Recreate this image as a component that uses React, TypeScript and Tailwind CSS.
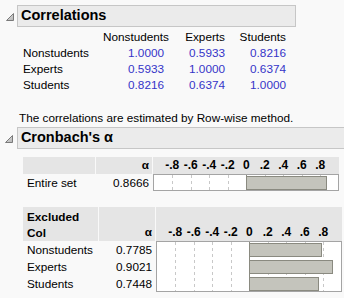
import React from 'react';

const font = { fontFamily: '"Liberation Sans", Arial, sans-serif' };

const ticks = [-0.8, -0.6, -0.4, -0.2, 0.2, 0.4, 0.6, 0.8];
const axisLabels = ['-.8', '-.6', '-.4', '-.2', '0', '.2', '.4', '.6', '.8'];

const corr = [
  { name: 'Nonstudents', v: ['1.0000', '0.5933', '0.8216'] },
  { name: 'Experts', v: ['0.5933', '1.0000', '0.6374'] },
  { name: 'Students', v: ['0.8216', '0.6374', '1.0000'] },
];

const excluded = [
  { name: 'Nonstudents', alpha: 0.7785 },
  { name: 'Experts', alpha: 0.9021 },
  { name: 'Students', alpha: 0.7448 },
];

function Disclosure() {
  return (
    <svg width="8" height="8" viewBox="0 0 8 8" className="block">
      <defs>
        <linearGradient id="tri" x1="0" y1="0" x2="1" y2="1">
          <stop offset="0" stopColor="#e6e6e6" />
          <stop offset="1" stopColor="#b4b4b4" />
        </linearGradient>
      </defs>
      <polygon points="0.5,7.5 7.5,0.5 7.5,7.5" fill="url(#tri)" stroke="#7a7a7a" strokeWidth="1" />
    </svg>
  );
}

function OutlineHeader({ title, open }: { title: string; open?: boolean }) {
  return (
    <div className="flex items-center">
      <div className="flex w-[17px] justify-center pl-[2px] pt-[1px]">
        <Disclosure />
      </div>
      <div
        className={
          'flex h-[22px] items-center border border-[#c6c6c6] bg-[#ebebeb] pl-[3px] text-[14.5px] font-bold text-black ' +
          (open ? 'w-[330px] border-r-0' : 'w-[279px]')
        }
      >
        {title}
      </div>
    </div>
  );
}

function AxisLabels() {
  return (
    <div className="flex pl-[10px] text-[12px] font-bold leading-[16px] text-black">
      {axisLabels.map((l) => (
        <span key={l} className="w-[18.5px] text-center">
          {l}
        </span>
      ))}
    </div>
  );
}

function AlphaChart({ values }: { values: number[] }) {
  const w = 186;
  const row = 17;
  const h = values.length * row;
  const zero = 93;
  const scale = 92.5;
  return (
    <svg width={w} height={h} className="block">
      <rect x={0.5} y={0.5} width={w - 1} height={h - 1} fill="#ffffff" stroke="#a4a4a4" />
      {ticks.map((t) => (
        <line
          key={t}
          x1={Math.round(zero + t * scale) + 0.5}
          x2={Math.round(zero + t * scale) + 0.5}
          y1={1}
          y2={h - 1}
          stroke="#c8c8c8"
          strokeDasharray="3 3"
        />
      ))}
      {values.map((v, i) => (
        <rect
          key={i}
          x={zero + 0.5}
          y={i * row + 2.5}
          width={Math.round(v * scale)}
          height={13}
          fill="#c4c4bc"
          stroke="#8a8a80"
        />
      ))}
      <line x1={zero + 0.5} x2={zero + 0.5} y1={1} y2={h - 1} stroke="#8a8a80" />
    </svg>
  );
}

export default function App() {
  return (
    <div className="h-[298px] w-[344px] overflow-hidden bg-[#f9f9f9] pt-[5px] text-[11.75px] text-black" style={font}>
      <OutlineHeader title="Correlations" />

      <div className="ml-[23px] mt-[2px] grid grid-cols-[80px_61px_61px_61px] leading-[16px]">
        <div />
        <div className="text-right">Nonstudents</div>
        <div className="text-right">Experts</div>
        <div className="text-right">Students</div>
        {corr.map((r) => (
          <React.Fragment key={r.name}>
            <div>{r.name}</div>
            {r.v.map((v, i) => (
              <div key={i} className="text-right text-[#3535c8]">
                {v}
              </div>
            ))}
          </React.Fragment>
        ))}
      </div>

      <p className="ml-[19px] mt-[17px] leading-[16px]">The correlations are estimated by Row-wise method.</p>

      <div className="mt-px">
        <OutlineHeader title="Cronbach's α" open />
      </div>

      {/* entire set */}
      <div className="ml-[23px] mt-[8px] w-fit">
        <div className="flex h-[17px] leading-[16px]">
          <div className="w-[73px] border-r border-[#f9f9f9] bg-[#e5e5e5]" />
          <div className="w-[57px] border-r border-[#f9f9f9] bg-[#e5e5e5] pr-[3px] text-right font-bold">α</div>
          <div className="w-[186px] bg-[#e5e5e5]">
            <AxisLabels />
          </div>
        </div>
        <div className="flex leading-[17px]">
          <div className="w-[73px] pl-[4px]">Entire set</div>
          <div className="w-[57px] pr-[4px] text-right">0.8666</div>
          <AlphaChart values={[0.8666]} />
        </div>
      </div>

      {/* excluded columns */}
      <div className="ml-[23px] mt-[16px] w-fit">
        <div className="flex h-[34px] leading-[16px]">
          <div className="w-[76px] border-r border-[#f9f9f9] bg-[#e5e5e5] pl-[4px] pt-[2px] font-bold">
            Excluded
            <br />
            Col
          </div>
          <div className="flex w-[57px] items-end justify-end border-r border-[#f9f9f9] bg-[#e5e5e5] pb-px pr-[3px] font-bold">
            α
          </div>
          <div className="flex w-[186px] items-end bg-[#e5e5e5] pb-px">
            <AxisLabels />
          </div>
        </div>
        <div className="flex">
          <div className="w-[76px] pl-[4px] leading-[17px]">
            {excluded.map((r) => (
              <div key={r.name}>{r.name}</div>
            ))}
          </div>
          <div className="w-[57px] pr-[4px] text-right leading-[17px]">
            {excluded.map((r) => (
              <div key={r.name}>{r.alpha.toFixed(4)}</div>
            ))}
          </div>
          <AlphaChart values={excluded.map((r) => r.alpha)} />
        </div>
      </div>
    </div>
  );
}
